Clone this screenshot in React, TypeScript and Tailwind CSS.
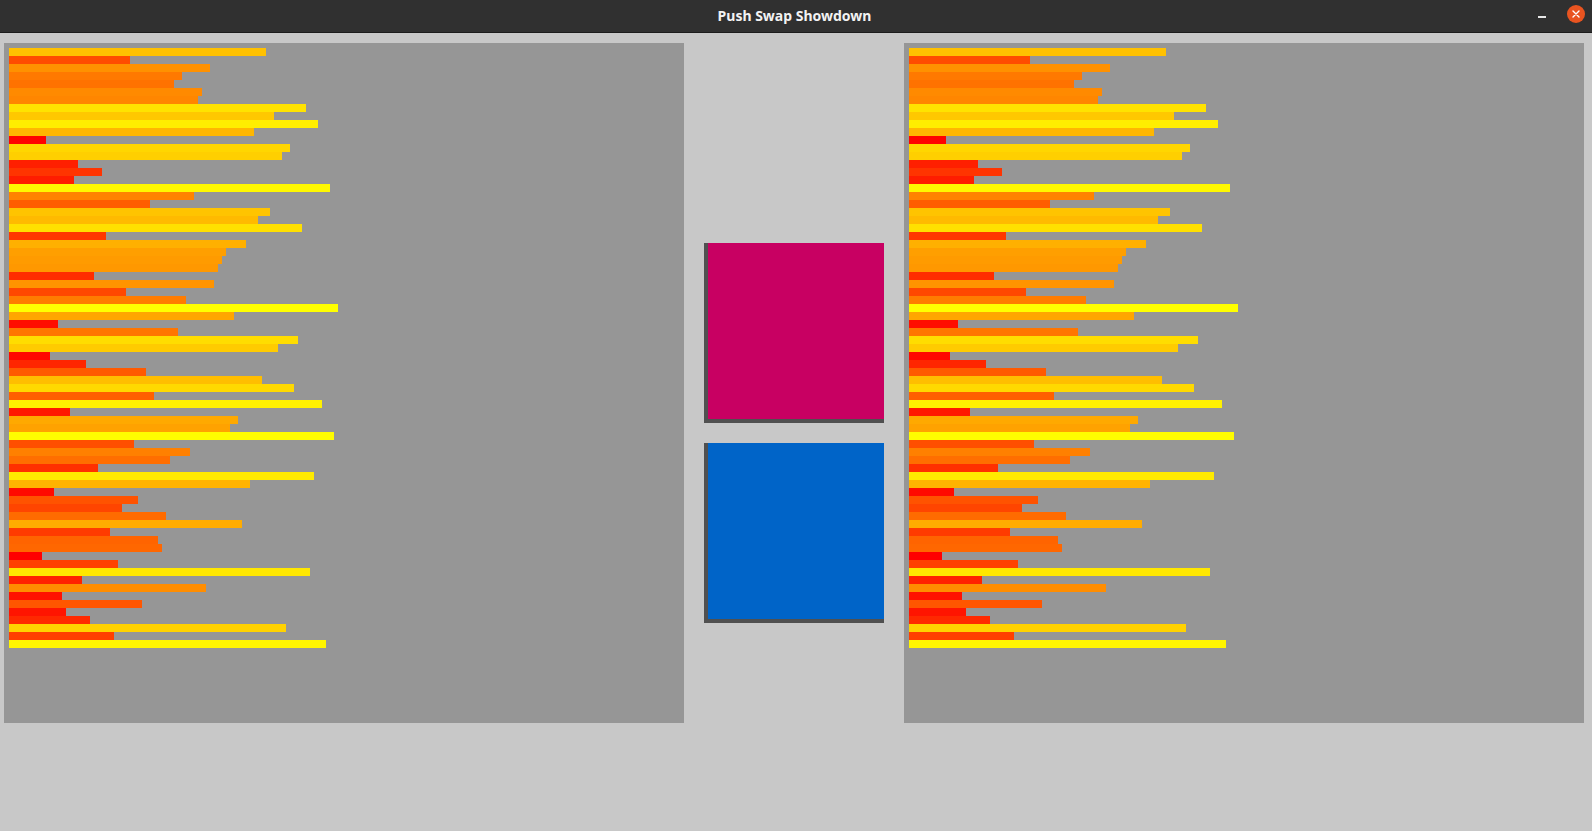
import React from 'react';

// stack values, same for both sides
const values = [
  64, 30, 50, 43, 41, 48, 47, 74, 66, 77, 61, 9, 70, 68, 17, 23, 16, 80, 46, 35,
  65, 62, 73, 24, 59, 54, 53, 52, 21, 51, 29, 44, 82, 56, 12, 42, 72, 67, 10, 19,
  34, 63, 71, 36, 78, 15, 57, 55, 81, 31, 45, 40, 22, 76, 60, 11, 32, 28, 39, 58,
  25, 37, 38, 8, 27, 75, 18, 49, 13, 33, 14, 20, 69, 26, 79,
];

const MIN = 8;
const MAX = 82;

const barColor = (v: number) => {
  const g = Math.round(((v - MIN) / (MAX - MIN)) * 255);
  return `rgb(255, ${g}, 0)`;
};

const StackPanel: React.FC<{ data: number[] }> = ({ data }) => (
  <div className="w-[680px] h-[680px] shrink-0 bg-[#969696] p-[5px] flex flex-col">
    {data.map((v, i) => (
      <div
        key={i}
        className="h-[8px] shrink-0"
        style={{ width: v * 4 + 1, backgroundColor: barColor(v) }}
      />
    ))}
  </div>
);

const TitleBar: React.FC = () => (
  <div className="h-[33px] shrink-0 bg-[#303030] border-b border-[#1c1c1c] grid grid-cols-[1fr_auto_1fr] items-center">
    <div />
    <span className="text-[14px] font-bold text-[#f2f2f2] -mt-[2px] -ml-[3px]">Push Swap Showdown</span>
    <div className="flex items-center justify-end pr-[7px]">
      <div className="w-[8px] h-[1.5px] bg-[#e6e6e6] mr-[21px] mt-[2px]" />
      <div className="w-[18px] h-[18px] rounded-full bg-[#e95420] flex items-center justify-center -mt-[4px]">
        <svg width="8" height="8" viewBox="0 0 8 8">
          <path d="M1 1 L7 7 M7 1 L1 7" stroke="#ffffff" strokeWidth="1.4" strokeLinecap="round" />
        </svg>
      </div>
    </div>
  </div>
);

export default function App() {
  return (
    <div
      className="w-[1592px] h-[831px] bg-[#c8c8c8] flex flex-col overflow-hidden"
      style={{ fontFamily: '"Noto Sans", "Open Sans", "Liberation Sans", sans-serif' }}
    >
      <TitleBar />
      <div className="flex flex-1 items-start pt-[10px] pl-[4px]">
        <StackPanel data={values} />
        <div className="w-[220px] shrink-0 flex flex-col items-center gap-[20px] pt-[200px]">
          <div className="w-[180px] h-[180px] bg-[#c80062] border-l-4 border-b-4 border-[#505050]" />
          <div className="w-[180px] h-[180px] bg-[#0064c8] border-l-4 border-b-4 border-[#505050]" />
        </div>
        <StackPanel data={values} />
      </div>
    </div>
  );
}
